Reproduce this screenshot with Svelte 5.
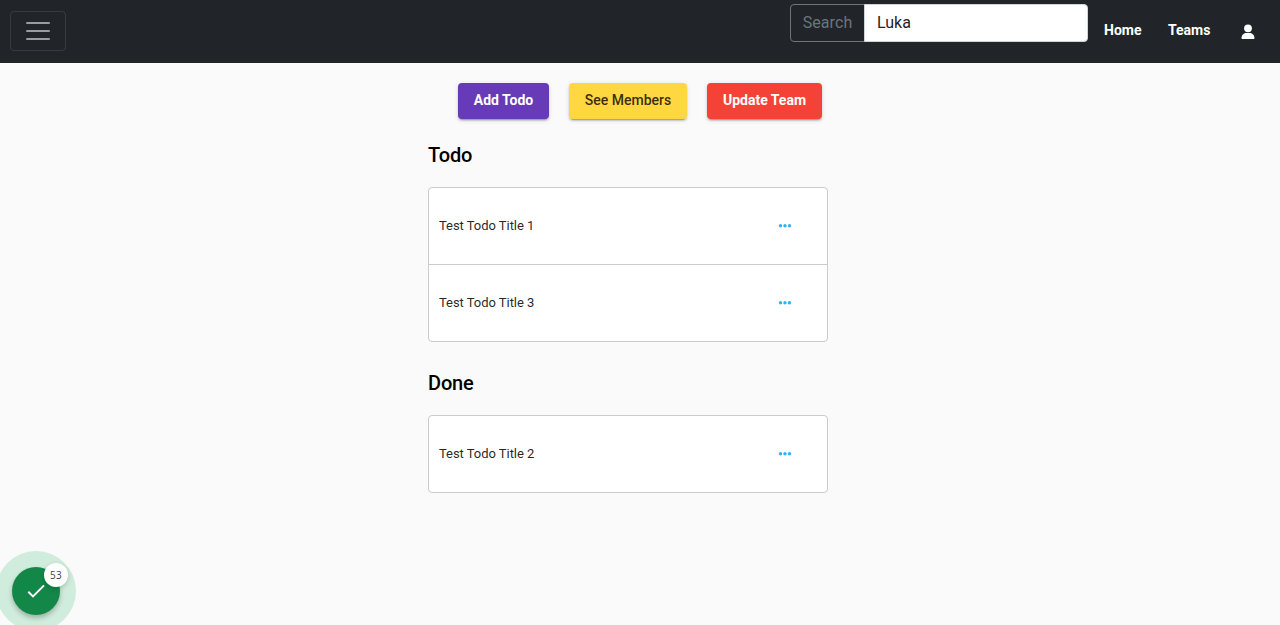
<script>
  const sections = [
    { title: 'Todo', items: ['Test Todo Title 1', 'Test Todo Title 3'] },
    { title: 'Done', items: ['Test Todo Title 2'] }
  ];
  let query = $state('Luka');
</script>

<div class="page">
  <header>
    <button class="toggler" aria-label="Toggle navigation">
      <svg width="30" height="30" viewBox="0 0 30 30"><path stroke="#fff" stroke-opacity=".55" stroke-linecap="round" stroke-miterlimit="10" stroke-width="2" d="M4 7h22M4 15h22M4 23h22" /></svg>
    </button>
    <div class="right">
      <form class="search">
        <button type="button">Search</button>
        <input type="text" bind:value={query} aria-label="Query" />
      </form>
      <nav>
        <a class="home" href="#home">Home</a>
        <a class="teams" href="#teams">Teams</a>
        <a class="user" href="#account" aria-label="Account">
          <svg width="14" height="16" viewBox="0 0 14 16"><circle cx="7" cy="4.3" r="3.9" fill="#fff" /><path fill="#fff" d="M.5 14.200C.5 11.300 2.500 9 5.200 9h3.600c2.700 0 4.700 2.300 4.700 5.200 0 .5-.4.800-.8.800H1.300c-.5 0-.8-.3-.8-.8z" /></svg>
        </a>
      </nav>
    </div>
  </header>

  <main>
    <div class="actions">
      <button class="add">Add Todo</button>
      <button class="members">See Members</button>
      <button class="update">Update Team</button>
    </div>
    {#each sections as section}
      <section>
        <h2>{section.title}</h2>
        <ul>
          {#each section.items as item}
            <li>
              <span>{item}</span>
              <svg width="14" height="6" viewBox="0 0 14 6" fill="#29b6f6"><circle cx="2.5" cy="2.8" r="1.7" /><circle cx="7" cy="2.8" r="1.7" /><circle cx="11.5" cy="2.8" r="1.7" /></svg>
            </li>
          {/each}
        </ul>
      </section>
    {/each}
  </main>

  <div class="widget">
    <div class="disc">
      <svg width="24" height="24" viewBox="0 0 24 24"><path d="M4.3 12.8l4.7 4.6L20 6.4" fill="none" stroke="#fff" stroke-width="2" /></svg>
    </div>
    <span class="count">53</span>
  </div>
</div>

<style>
  :global(body) { margin: 0; background: #fafafa; }
  .page {
    position: relative;
    box-sizing: border-box;
    height: 625px;
    overflow: hidden;
    background: #fafafa;
    font-family: Roboto, sans-serif;
    color: #000;
  }
  button, input { font-family: inherit; margin: 0; box-sizing: border-box; }
  header {
    box-sizing: border-box;
    height: 63px;
    background: #212529;
    display: flex;
    justify-content: space-between;
    align-items: flex-start;
    padding-left: 10px;
  }
  .toggler {
    margin-top: 11px;
    width: 56px;
    height: 40px;
    padding: 0;
    border: 1px solid rgba(255, 255, 255, .1);
    border-radius: 4px;
    background: none;
    display: flex;
    align-items: center;
    justify-content: center;
  }
  .right { display: flex; }
  .search { display: flex; margin: 4px 16px 0 0; width: 298px; height: 38px; }
  .search button {
    width: 75px;
    padding: 0 0 2px;
    border: 1px solid #6c757d;
    border-radius: 4px 0 0 4px;
    background: none;
    color: #6c757d;
    font-size: 16px;
    font-weight: 400;
    letter-spacing: .1px;
  }
  .search input {
    width: 224px;
    margin-left: -1px;
    padding: 0 12px 2px;
    border: 1px solid #ced4da;
    border-radius: 0 4px 4px 0;
    background: #fff;
    color: #212529;
    font-size: 16px;
    outline: 0;
  }
  nav { display: flex; width: 176px; padding-top: 20px; }
  nav a { color: #fff; text-decoration: none; font-size: 14px; line-height: 20px; font-weight: 700; }
  .home { width: 64px; }
  .teams { width: 73px; }
  .user svg { display: block; margin-top: 4px; }
  main { width: 400px; margin: 0 auto; padding-right: 24px; }
  .actions { display: flex; gap: 20px; padding: 20px 0 0 30px; }
  .actions button {
    height: 36px;
    padding: 0 0 2px;
    border: 0;
    border-radius: 4px;
    color: #fff;
    font-size: 14px;
    font-weight: 700;
    line-height: 34px;
    white-space: nowrap;
    flex-shrink: 0;
    box-shadow: 0 3px 1px -2px rgba(0,0,0,.2), 0 2px 2px rgba(0,0,0,.14), 0 1px 5px rgba(0,0,0,.12);
  }
  .actions .add { width: 91px; background: #673ab7; }
  .actions .members { width: 118px; background: #ffd740; color: rgba(0,0,0,.8); font-weight: 500; }
  .actions .update { width: 115px; background: #f44336; }
  section { padding-top: 20px; }
  section + section { padding-top: 25px; }
  h2 { margin: 0; height: 48px; line-height: 32px; font-size: 20px; font-weight: 500; letter-spacing: -.15px; }
  ul { list-style: none; margin: 0; padding: 0; border: 1px solid #ccc; border-radius: 4px; background: #fff; }
  li {
    height: 76px;
    padding: 0 35px 0 10px;
    display: flex;
    align-items: center;
    justify-content: space-between;
    font-size: 13px;
    letter-spacing: -.04px;
    color: rgba(0,0,0,.87);
  }
  li span { padding-bottom: 2px; }
  li + li { border-top: 1px solid #ccc; }
  .widget {
    position: absolute;
    left: -4px;
    top: 551px;
    width: 80px;
    height: 80px;
    border-radius: 50%;
    background: #d0ecdc;
  }
  .disc {
    width: 48px;
    height: 48px;
    margin: 16px;
    border-radius: 50%;
    background: #128748;
    display: flex;
    align-items: center;
    justify-content: center;
    box-shadow: 0 3px 5px rgba(0,0,0,.25);
  }
  .count {
    position: absolute;
    left: 48px;
    top: 12px;
    width: 24px;
    height: 24px;
    border-radius: 50%;
    background: #fff;
    color: #444;
    text-align: center;
    font: 10px/25px "Open Sans", sans-serif;
    letter-spacing: .2px;
    box-shadow: 0 2px 5px rgba(0,0,0,.18);
  }
</style>
